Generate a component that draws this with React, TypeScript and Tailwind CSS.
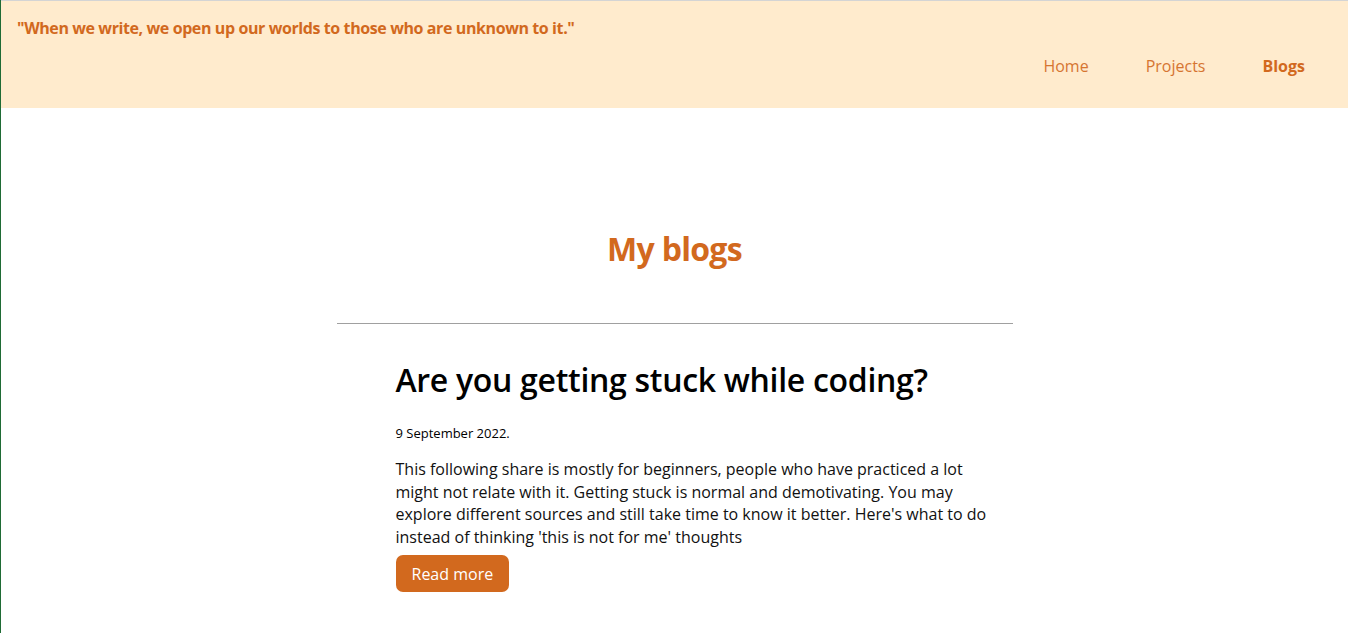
import React from 'react';

export default function App() {
  const links = [
    { label: 'Home', active: false },
    { label: 'Projects', active: false },
    { label: 'Blogs', active: true }
  ];

  return (
    <div className="min-h-[633px] bg-white border-l border-[#1f6b35] font-['Open_Sans',sans-serif]">
      {/* Header */}
      <header className="h-[108px] bg-[#ffebcd] border-t border-[#d4d4d4]">
        <h3 className="pt-[16px] pl-[16px] text-[16px] leading-[22px] font-bold tracking-[-0.4px] text-[#d2691e]">
          "When we write, we open up our worlds to those who are unknown to it."
        </h3>
        <nav className="mt-[16px] flex justify-end pr-[43px]">
          <ul className="flex gap-[57px] text-[16px] leading-[22px] text-[#d2691e]">
            {links.map((link) => (
              <li key={link.label} className={link.active ? 'font-bold' : 'font-normal opacity-90'}>
                {link.label}
              </li>
            ))}
          </ul>
        </nav>
      </header>

      {/* Blogs */}
      <main className="w-[676px] mx-auto">
        <h1 className="mt-[119px] text-center text-[32px] leading-[44px] font-bold tracking-[-0.7px] text-[#d2691e]">
          My blogs
        </h1>
        <hr className="mt-[52px] border-t border-[#a0a0a0]" />
        <article className="pl-[59px] pr-[14px]">
          <h2 className="mt-[34px] text-[32px] leading-[44px] font-semibold tracking-[-0.3px] text-black">
            Are you getting stuck while coding?
          </h2>
          <p className="mt-[22px] text-[13px] leading-[18px] text-black">9 September 2022.</p>
          <p className="mt-[16px] text-[16px] leading-[22.5px] text-[#111]">
            This following share is mostly for beginners, people who have practiced a lot might not relate
            with it. Getting stuck is normal and demotivating. You may explore different sources and still
            take time to know it better. Here's what to do instead of thinking 'this is not for me' thoughts
          </p>
          <button className="mt-[7px] h-[37px] px-[16px] rounded-[7px] bg-[#d2691e] text-white text-[16px]">
            Read more
          </button>
        </article>
      </main>
    </div>
  );
}
